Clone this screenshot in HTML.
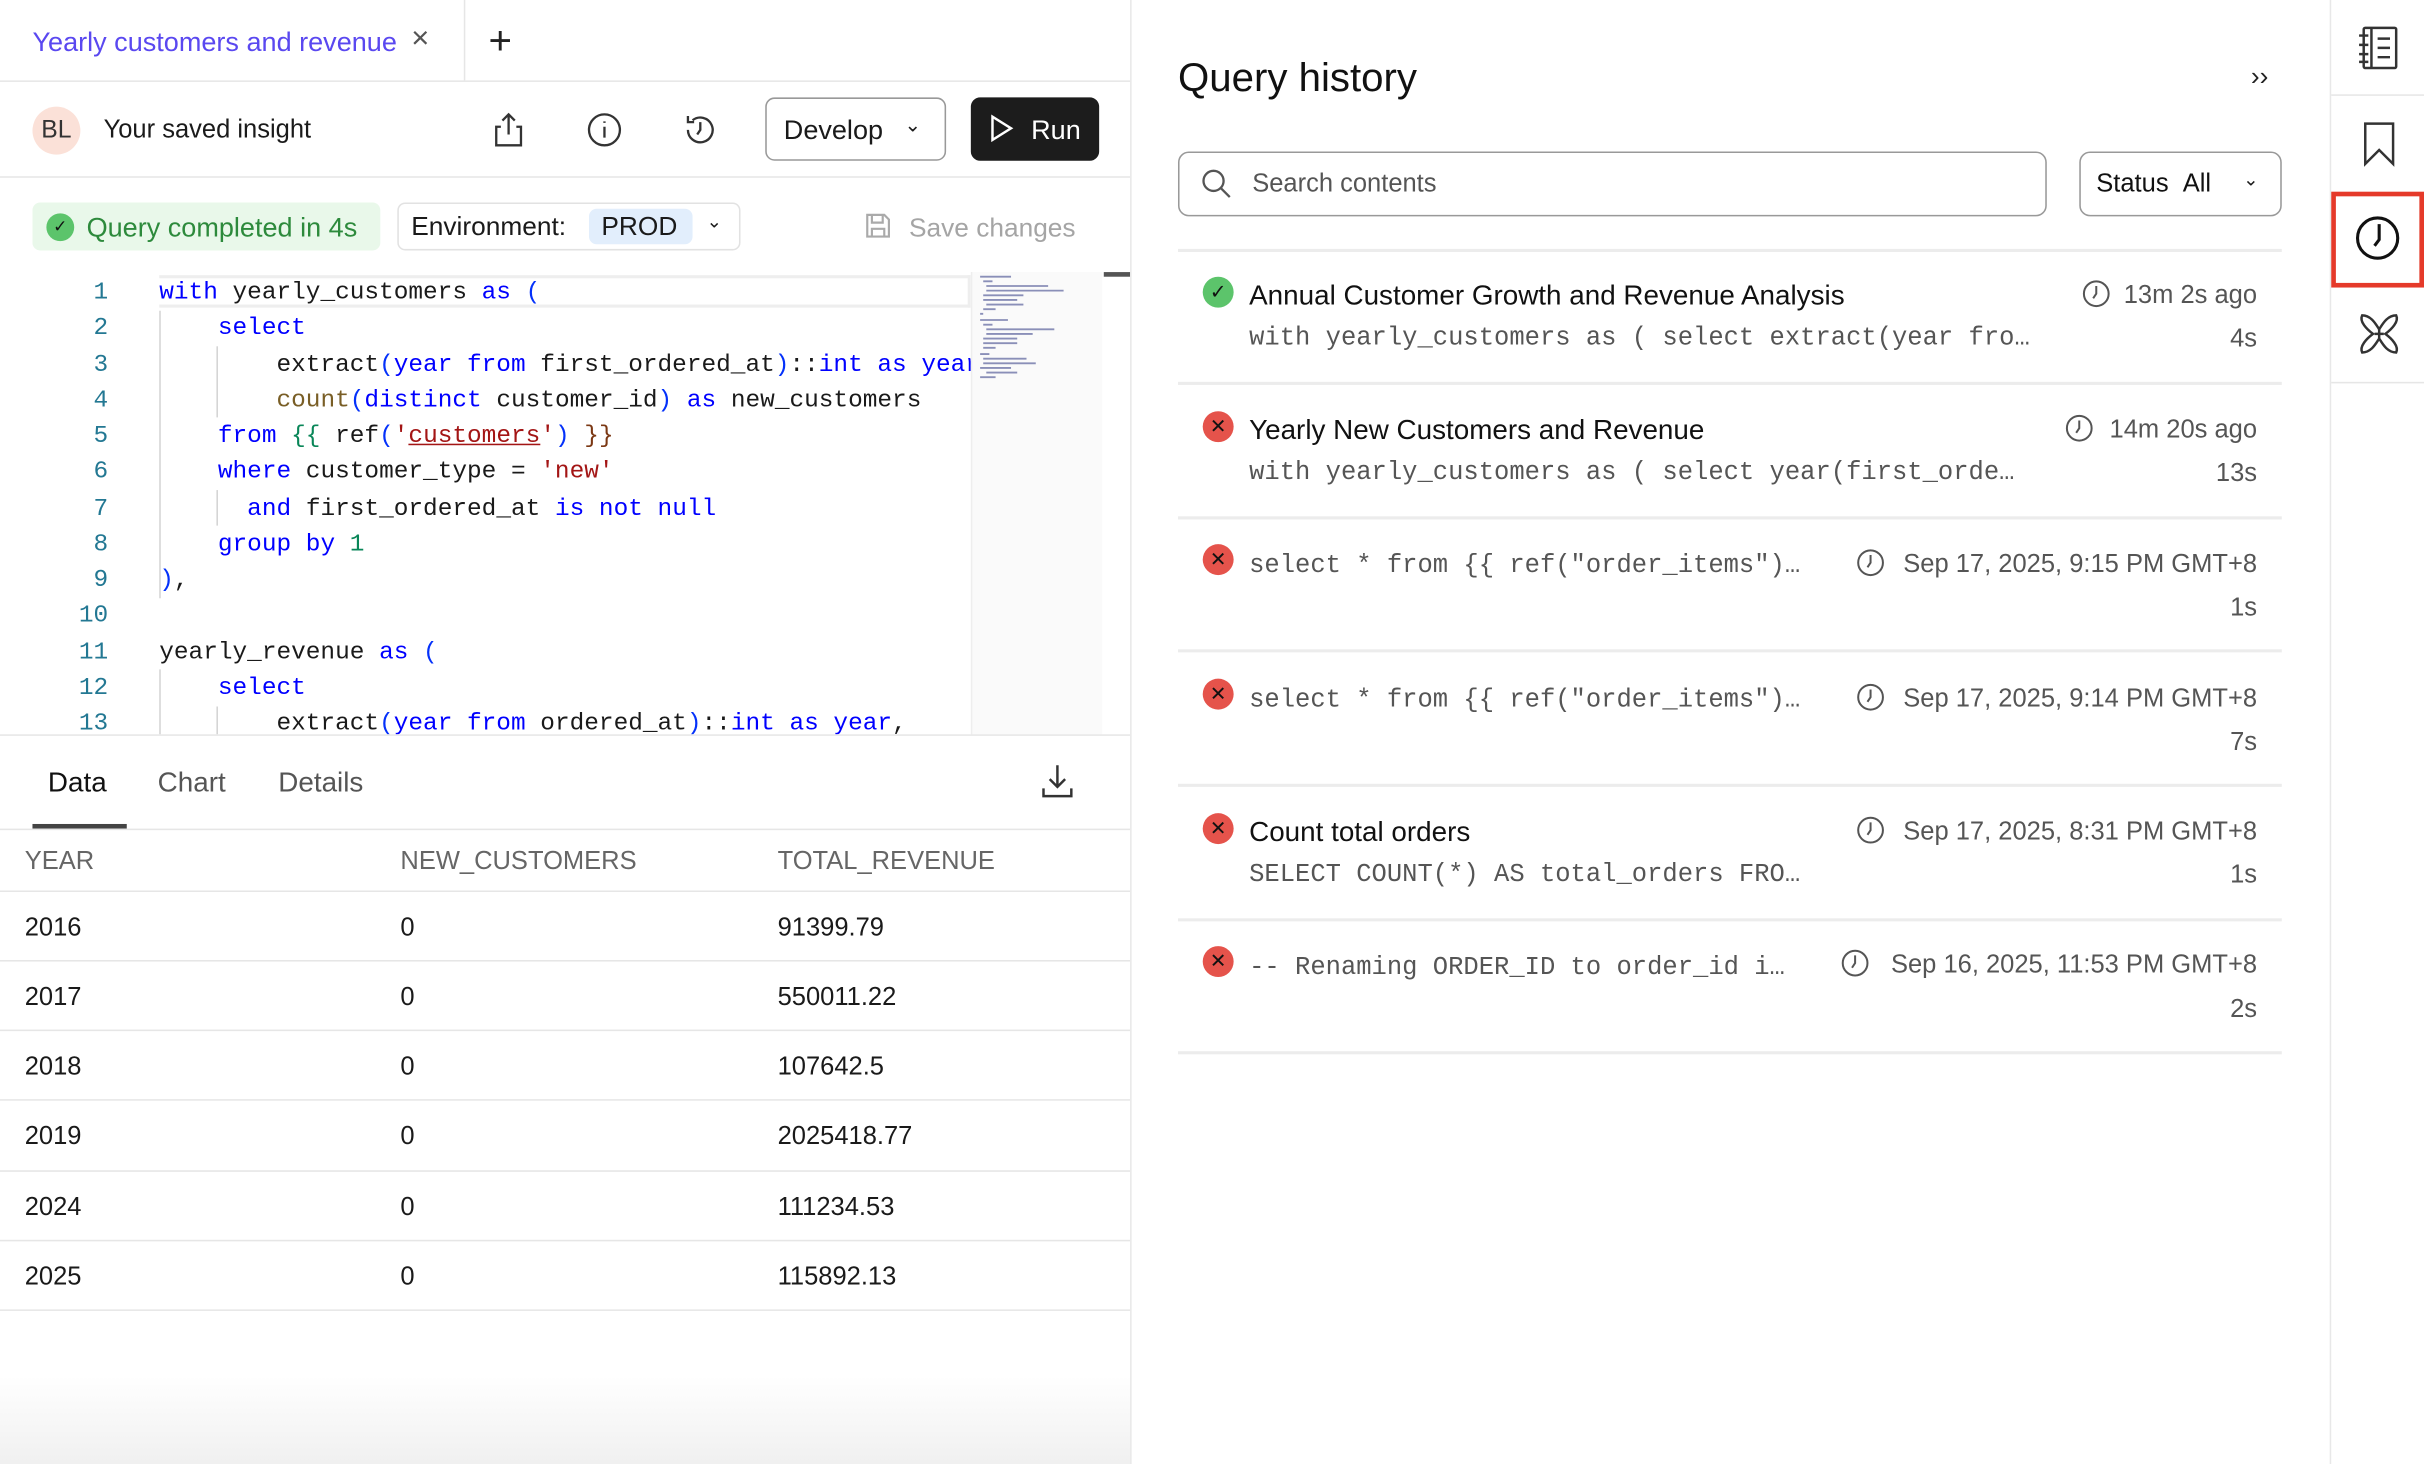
<!DOCTYPE html>
<html><head><meta charset="utf-8"><style>
*{box-sizing:border-box;margin:0;padding:0}
html,body{width:2424px;height:1464px;overflow:hidden;background:#fff}
#w{position:absolute;left:0;top:0;width:1568px;height:947px;transform:scale(1.54592);transform-origin:0 0;font-family:"Liberation Sans",sans-serif;color:#1a1a1a;font-size:16px}
.a{position:absolute}
.hl{position:absolute;height:1px;background:#e6e6e6}
.vl{position:absolute;width:1px;background:#e6e6e6}
.code{position:absolute;left:0;top:177px;width:628px;height:298px;overflow:hidden;font-family:"Liberation Mono",monospace;font-size:15.8px}
.ln{position:absolute;left:0;width:70px;text-align:right;color:#237893}
.cl{position:absolute;left:103px;white-space:pre;color:#1a1a1a}
.k{color:#0000ff}.f{color:#795e26}.s{color:#a31515}.n{color:#098658}.p{color:#0431fa}.b{color:#7b3814}
.guide{position:absolute;width:1px;background:#d4d4d4}
.th{position:absolute;color:#666;font-size:16.5px}
.td{position:absolute;font-size:16.5px}
.item .t{position:absolute;left:808px;font-size:18px;color:#111}
.item .c{position:absolute;left:808px;font-family:"Liberation Mono",monospace;font-size:16.5px;color:#555;white-space:pre}
.item .r{position:absolute;right:108px;font-size:16.5px;color:#555;text-align:right;white-space:nowrap}
.ic{position:absolute;left:778px;width:20px;height:20px;border-radius:50%;font-size:13px;text-align:center;line-height:20px}
.err{background:#e5534b;color:#111}
.ok{background:#5cc46b;color:#111}
</style></head><body><div id="w">

<div class="a" style="left:21px;top:17px;color:#5a48f0;font-size:17.5px">Yearly customers and revenue</div>
<div class="a" style="left:266px;top:14px;font-size:20px;color:#555">×</div>
<div class="vl" style="left:300px;top:0;height:52px"></div>
<div class="a" style="left:316px;top:11px;font-size:26px;font-weight:300;color:#222">+</div>
<div class="hl" style="left:0;top:52px;width:731px"></div>

<div class="a" style="left:21px;top:69px;width:31px;height:31px;border-radius:50%;background:#fbe1d8;font-size:16px;line-height:31px;text-align:center;color:#333">BL</div>
<div class="a" style="left:67px;top:75px;font-size:16.5px">Your saved insight</div>
<svg class="a" style="left:318px;top:72px" width="22" height="24" viewBox="0 0 22 24" fill="none" stroke="#333" stroke-width="1.5"><path d="M11 15V2M7 6l4-4 4 4M6 10H3v12h16V10h-3"/></svg>
<svg class="a" style="left:380px;top:73px" width="22" height="22" viewBox="0 0 22 22" fill="none" stroke="#333" stroke-width="1.5"><circle cx="11" cy="11" r="10"/><path d="M11 9v7M11 5.5v1"/></svg>
<svg class="a" style="left:442px;top:73px" width="22" height="22" viewBox="0 0 22 22" fill="none" stroke="#333" stroke-width="1.5"><path d="M3 11a8 8 0 1 0 3-6.2M3 2v4h4M11 6v5l-2 3"/></svg>
<div class="a" style="left:495px;top:63px;width:117px;height:41px;border:1px solid #999;border-radius:6px"></div>
<div class="a" style="left:507px;top:74px;font-size:17.5px">Develop</div>
<div class="a" style="left:585px;top:73px;font-size:13px">&#8964;</div>
<div class="a" style="left:628px;top:63px;width:83px;height:41px;background:#1c1c1c;border-radius:6px"></div>
<svg class="a" style="left:640px;top:74px" width="16" height="18" viewBox="0 0 16 18" fill="none" stroke="#fff" stroke-width="1.6"><path d="M2 1.5v15l12-7.5z"/></svg>
<div class="a" style="left:667px;top:74px;font-size:17.5px;color:#fff">Run</div>
<div class="hl" style="left:0;top:114px;width:731px"></div>

<div class="a" style="left:21px;top:131px;width:225px;height:31px;background:#e9f8ea;border-radius:5px"></div>
<div class="a" style="left:30px;top:138px;width:18px;height:18px;border-radius:50%;background:#5cc46b;color:#111;font-size:11px;text-align:center;line-height:18px">✓</div>
<div class="a" style="left:56px;top:137px;font-size:17.5px;color:#2d8a3c">Query completed in 4s</div>
<div class="a" style="left:257px;top:131px;width:222px;height:31px;border:1px solid #e2e2e2;border-radius:5px"></div>
<div class="a" style="left:266px;top:137px;font-size:17px">Environment:</div>
<div class="a" style="left:381px;top:135px;width:67px;height:23px;background:#e2eefc;border-radius:5px"></div>
<div class="a" style="left:389px;top:137px;font-size:17px">PROD</div>
<div class="a" style="left:457px;top:136px;font-size:12px">&#8964;</div>
<svg class="a" style="left:559px;top:137px" width="18" height="18" viewBox="0 0 18 18" fill="none" stroke="#aaa" stroke-width="1.4"><path d="M2 2h11l3 3v11H2zM5 2v5h7V2M5 16v-5h8v5"/></svg>
<div class="a" style="left:588px;top:138px;font-size:17px;color:#a5a5a5">Save changes</div>

<div class="code">
<div class="a" style="left:103px;top:1px;width:525px;height:21px;border:2px solid #eee;border-left:none"></div>
<div class="guide" style="left:103px;top:24px;height:186px"></div>
<div class="guide" style="left:140px;top:47px;height:46px"></div>
<div class="guide" style="left:140px;top:140px;height:23px"></div>
<div class="guide" style="left:103px;top:256px;height:50px"></div>
<div class="guide" style="left:140px;top:280px;height:30px"></div>
<div class="ln" style="top:3px">1</div><div class="cl" style="top:3px"><span class="k">with</span> yearly_customers <span class="k">as</span> <span class="p">(</span></div>
<div class="ln" style="top:26px">2</div><div class="cl" style="top:26px">    <span class="k">select</span></div>
<div class="ln" style="top:50px">3</div><div class="cl" style="top:50px">        extract<span class="p">(</span><span class="k">year from</span> first_ordered_at<span class="p">)</span>::<span class="k">int as year</span>,</div>
<div class="ln" style="top:73px">4</div><div class="cl" style="top:73px">        <span class="f">count</span><span class="p">(</span><span class="k">distinct</span> customer_id<span class="p">)</span> <span class="k">as</span> new_customers</div>
<div class="ln" style="top:96px">5</div><div class="cl" style="top:96px">    <span class="k">from</span> <span class="n">{{</span> ref<span class="p">(</span><span class="s">'<u>customers</u>'</span><span class="p">)</span> <span class="b">}}</span></div>
<div class="ln" style="top:119px">6</div><div class="cl" style="top:119px">    <span class="k">where</span> customer_type = <span class="s">'new'</span></div>
<div class="ln" style="top:143px">7</div><div class="cl" style="top:143px">      <span class="k">and</span> first_ordered_at <span class="k">is not null</span></div>
<div class="ln" style="top:166px">8</div><div class="cl" style="top:166px">    <span class="k">group by</span> <span class="n">1</span></div>
<div class="ln" style="top:189px">9</div><div class="cl" style="top:189px"><span class="p">)</span>,</div>
<div class="ln" style="top:212px">10</div>
<div class="ln" style="top:236px">11</div><div class="cl" style="top:236px">yearly_revenue <span class="k">as</span> <span class="p">(</span></div>
<div class="ln" style="top:259px">12</div><div class="cl" style="top:259px">    <span class="k">select</span></div>
<div class="ln" style="top:282px">13</div><div class="cl" style="top:282px">        extract<span class="p">(</span><span class="k">year from</span> ordered_at<span class="p">)</span>::<span class="k">int as year</span>,</div>
</div>
<div class="a" style="left:628px;top:176px;width:85px;height:299px;background:#fafafa;border-left:1px solid #eee"></div>
<svg class="a" style="left:632px;top:178px" width="78" height="70" viewBox="0 0 78 70"><g stroke-width="1.2">
<path d="M2 1h20M4 4h6M6 7h40M6 10h50M4 13h26M4 16h22M6 19h24M4 22h8M2 25h2M2 29h18M4 32h6M6 35h44M6 38h30M4 41h22M4 44h22M4 47h8M2 51h6M4 54h28M4 57h34M2 60h20M6 63h20M2 66h10" stroke="#8a8fb8"/></g></svg>
<div class="a" style="left:714px;top:176px;width:17px;height:3px;background:#555"></div>
<div class="hl" style="left:0;top:475px;width:731px"></div>

<div class="a" style="left:31px;top:496px;font-size:18px;color:#111">Data</div>
<div class="a" style="left:102px;top:496px;font-size:18px;color:#555">Chart</div>
<div class="a" style="left:180px;top:496px;font-size:18px;color:#555">Details</div>
<div class="a" style="left:21px;top:533px;width:61px;height:3px;background:#444"></div>
<svg class="a" style="left:673px;top:493px" width="22" height="24" viewBox="0 0 22 24" fill="none" stroke="#333" stroke-width="1.6"><path d="M11 2v14M6 11l5 5 5-5M2 17v5h18v-5"/></svg>
<div class="hl" style="left:0;top:536px;width:731px"></div>
<div class="th" style="left:16px;top:548px">YEAR</div>
<div class="th" style="left:259px;top:548px">NEW_CUSTOMERS</div>
<div class="th" style="left:503px;top:548px">TOTAL_REVENUE</div>
<div class="hl" style="left:0;top:576px;width:731px"></div>
<div class="td" style="left:16px;top:591px">2016</div><div class="td" style="left:259px;top:591px">0</div><div class="td" style="left:503px;top:591px">91399.79</div>
<div class="hl" style="left:0;top:621px;width:731px"></div>
<div class="td" style="left:16px;top:636px">2017</div><div class="td" style="left:259px;top:636px">0</div><div class="td" style="left:503px;top:636px">550011.22</div>
<div class="hl" style="left:0;top:666px;width:731px"></div>
<div class="td" style="left:16px;top:681px">2018</div><div class="td" style="left:259px;top:681px">0</div><div class="td" style="left:503px;top:681px">107642.5</div>
<div class="hl" style="left:0;top:711px;width:731px"></div>
<div class="td" style="left:16px;top:726px">2019</div><div class="td" style="left:259px;top:726px">0</div><div class="td" style="left:503px;top:726px">2025418.77</div>
<div class="hl" style="left:0;top:757px;width:731px"></div>
<div class="td" style="left:16px;top:772px">2024</div><div class="td" style="left:259px;top:772px">0</div><div class="td" style="left:503px;top:772px">111234.53</div>
<div class="hl" style="left:0;top:802px;width:731px"></div>
<div class="td" style="left:16px;top:817px">2025</div><div class="td" style="left:259px;top:817px">0</div><div class="td" style="left:503px;top:817px">115892.13</div>
<div class="hl" style="left:0;top:847px;width:731px"></div>
<div class="a" style="left:0;top:890px;width:731px;height:57px;background:linear-gradient(#fff,#f0f0f0)"></div>

<div class="vl" style="left:731px;top:0;height:947px;background:#e8e8e8"></div>

<div class="a" style="left:762px;top:35px;font-size:26px;color:#111">Query history</div>
<div class="a" style="left:1456px;top:40px;font-size:17px;color:#222">&#8250;&#8250;</div>
<div class="a" style="left:762px;top:98px;width:562px;height:42px;border:1px solid #999;border-radius:7px"></div>
<svg class="a" style="left:777px;top:109px" width="20" height="20" viewBox="0 0 20 20" fill="none" stroke="#555" stroke-width="1.5"><circle cx="8" cy="8" r="6.5"/><path d="M13 13l5.5 5.5"/></svg>
<div class="a" style="left:810px;top:110px;font-size:16.5px;color:#555">Search contents</div>
<div class="a" style="left:1345px;top:98px;width:131px;height:42px;border:1px solid #999;border-radius:7px"></div>
<div class="a" style="left:1356px;top:110px;font-size:16.5px;color:#111">Status&nbsp;&nbsp;All</div>
<div class="a" style="left:1451px;top:109px;font-size:12px">&#8964;</div>

<div class="hl" style="left:762px;top:161px;width:714px;height:2px;background:#ececec"></div>
<div class="item">
<div class="ic ok" style="top:179px">✓</div>
<div class="t" style="top:181px">Annual Customer Growth and Revenue Analysis</div>
<div class="r" style="top:182px">13m 2s ago</div>
<div class="c" style="top:209px">with yearly_customers as ( select extract(year fro…</div>
<div class="r" style="top:210px">4s</div>
</div>
<div class="hl" style="left:762px;top:247px;width:714px;height:2px;background:#ececec"></div>
<div class="item">
<div class="ic err" style="top:266px">✕</div>
<div class="t" style="top:268px">Yearly New Customers and Revenue</div>
<div class="r" style="top:269px">14m 20s ago</div>
<div class="c" style="top:296px">with yearly_customers as ( select year(first_orde…</div>
<div class="r" style="top:297px">13s</div>
</div>
<div class="hl" style="left:762px;top:334px;width:714px;height:2px;background:#ececec"></div>
<div class="item">
<div class="ic err" style="top:352px">✕</div>
<div class="c" style="top:356px">select * from {{ ref("order_items")…</div>
<div class="r" style="top:356px">Sep 17, 2025, 9:15 PM GMT+8</div>
<div class="r" style="top:384px">1s</div>
</div>
<div class="hl" style="left:762px;top:420px;width:714px;height:2px;background:#ececec"></div>
<div class="item">
<div class="ic err" style="top:439px">✕</div>
<div class="c" style="top:443px">select * from {{ ref("order_items")…</div>
<div class="r" style="top:443px">Sep 17, 2025, 9:14 PM GMT+8</div>
<div class="r" style="top:471px">7s</div>
</div>
<div class="hl" style="left:762px;top:507px;width:714px;height:2px;background:#ececec"></div>
<div class="item">
<div class="ic err" style="top:526px">✕</div>
<div class="t" style="top:528px">Count total orders</div>
<div class="r" style="top:529px">Sep 17, 2025, 8:31 PM GMT+8</div>
<div class="c" style="top:556px">SELECT COUNT(*) AS total_orders FRO…</div>
<div class="r" style="top:557px">1s</div>
</div>
<div class="hl" style="left:762px;top:594px;width:714px;height:2px;background:#ececec"></div>
<div class="item">
<div class="ic err" style="top:612px">✕</div>
<div class="c" style="top:616px">-- Renaming ORDER_ID to order_id i…</div>
<div class="r" style="top:615px">Sep 16, 2025, 11:53 PM GMT+8</div>
<div class="r" style="top:644px">2s</div>
</div>
<div class="hl" style="left:762px;top:680px;width:714px;height:2px;background:#ececec"></div>
<svg class="a" style="left:1347px;top:181px" width="18" height="18" viewBox="0 0 18 18" fill="none" stroke="#555" stroke-width="1.3"><circle cx="9" cy="9" r="8"/><path d="M9 4v5l-2 3"/></svg>
<svg class="a" style="left:1336px;top:268px" width="18" height="18" viewBox="0 0 18 18" fill="none" stroke="#555" stroke-width="1.3"><circle cx="9" cy="9" r="8"/><path d="M9 4v5l-2 3"/></svg>
<svg class="a" style="left:1201px;top:355px" width="18" height="18" viewBox="0 0 18 18" fill="none" stroke="#555" stroke-width="1.3"><circle cx="9" cy="9" r="8"/><path d="M9 4v5l-2 3"/></svg>
<svg class="a" style="left:1201px;top:442px" width="18" height="18" viewBox="0 0 18 18" fill="none" stroke="#555" stroke-width="1.3"><circle cx="9" cy="9" r="8"/><path d="M9 4v5l-2 3"/></svg>
<svg class="a" style="left:1201px;top:528px" width="18" height="18" viewBox="0 0 18 18" fill="none" stroke="#555" stroke-width="1.3"><circle cx="9" cy="9" r="8"/><path d="M9 4v5l-2 3"/></svg>
<svg class="a" style="left:1191px;top:614px" width="18" height="18" viewBox="0 0 18 18" fill="none" stroke="#555" stroke-width="1.3"><circle cx="9" cy="9" r="8"/><path d="M9 4v5l-2 3"/></svg>

<div class="vl" style="left:1507px;top:0;height:947px;background:#e8e8e8"></div>
<svg class="a" style="left:1525px;top:16px" width="28" height="30" viewBox="0 0 28 30" fill="none" stroke="#333" stroke-width="1.6"><rect x="4" y="2" width="21" height="26" rx="1"/><path d="M9 2v26M1 7h6M1 13h6M1 19h6M1 24h6M13 9h8M13 15h8M13 21h8"/></svg>
<div class="hl" style="left:1508px;top:61px;width:60px"></div>
<svg class="a" style="left:1527px;top:78px" width="24" height="30" viewBox="0 0 24 30" fill="none" stroke="#333" stroke-width="1.6"><path d="M3 2h18v26l-9-9-9 9z"/></svg>
<div class="a" style="left:1508px;top:124px;width:60px;height:62px;border:3px solid #e53a2a"></div>
<svg class="a" style="left:1523px;top:139px" width="30" height="30" viewBox="0 0 30 30" fill="none" stroke="#111" stroke-width="2"><circle cx="15" cy="15" r="13"/><path d="M16 6v10l-3 4"/></svg>
<svg class="a" style="left:1524px;top:201px" width="30" height="30" viewBox="0 0 30 30" fill="none" stroke="#333" stroke-width="1.6"><path d="M4 3c6 0 9 6 11 9 2-3 5-9 11-9 2 4-3 9-7 12 4 3 9 8 7 12-6 0-9-6-11-9-2 3-5 9-11 9-2-4 3-9 7-12-4-3-9-8-7-12z"/><path d="M15 12v6M12 15h6"/></svg>
<div class="hl" style="left:1508px;top:247px;width:60px"></div>

</div></body></html>
